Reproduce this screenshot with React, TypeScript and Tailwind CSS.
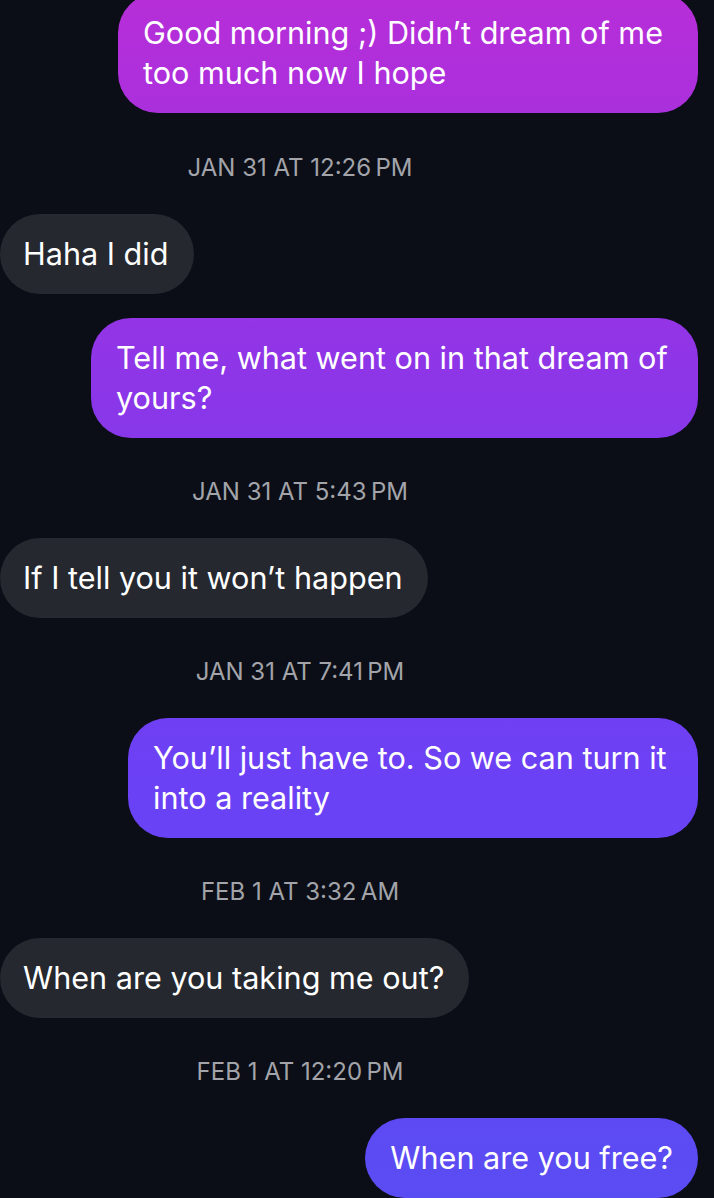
const font = { fontFamily: "Inter, 'Noto Sans', sans-serif" };

type Item =
  | { kind: "sent"; lines: string[]; w?: string }
  | { kind: "recv"; lines: string[] }
  | { kind: "time"; text: string };

const thread: Item[] = [
  { kind: "sent", lines: ["Good morning ;) Didn\u2019t dream of me", "too much now I hope"], w: "w-[580px]" },
  { kind: "time", text: "JAN 31 AT 12:26\u2009PM" },
  { kind: "recv", lines: ["Haha I did"] },
  { kind: "sent", lines: ["Tell me, what went on in that dream of", "yours?"], w: "w-[607px]" },
  { kind: "time", text: "JAN 31 AT 5:43\u2009PM" },
  { kind: "recv", lines: ["If I tell you it won\u2019t happen"] },
  { kind: "time", text: "JAN 31 AT 7:41\u2009PM" },
  { kind: "sent", lines: ["You\u2019ll just have to. So we can turn it", "into a reality"], w: "w-[570px]" },
  { kind: "time", text: "FEB 1 AT 3:32\u2009AM" },
  { kind: "recv", lines: ["When are you taking me out?"] },
  { kind: "time", text: "FEB 1 AT 12:20\u2009PM" },
  { kind: "sent", lines: ["When are you free?"] },
];

function Lines({ lines }: { lines: string[] }) {
  return (
    <>
      {lines.map((l, i) => (
        <div key={i} className="whitespace-nowrap">
          {l}
        </div>
      ))}
    </>
  );
}

export default function App() {
  return (
    <div className="h-[1198px] w-[714px] overflow-hidden bg-[#0b0e16] text-white" style={font}>
      <div className="flex flex-col -mt-[7px]">
        {thread.map((item, i) => {
          const prev = thread[i - 1];
          const afterBubble = prev && prev.kind !== "time";
          if (item.kind === "time") {
            return (
              <div
                key={i}
                className={`${i === 1 ? "mt-[43px]" : "mt-[42px]"} mb-[34px] h-6 w-[600px] text-center text-[24px] leading-6 text-[#a2a4aa]`}
              >
                {item.text}
              </div>
            );
          }
          const gap = afterBubble ? "mt-6" : "";
          if (item.kind === "sent") {
            return (
              <div
                key={i}
                className={`${gap} ${item.w ?? ""} mr-4 self-end rounded-[40px] bg-[linear-gradient(180deg,#b62ed8_0%,#9a33e3_22%,#8c36e8_32%,#6b41f5_65%,#5a4cf3_100%)] bg-fixed px-[25px] py-5 text-[30.6px] leading-10 text-white`}
              >
                <Lines lines={item.lines} />
              </div>
            );
          }
          return (
            <div
              key={i}
              className={`${gap} self-start rounded-[40px] bg-[#25282e] pl-[23px] pr-[25px] py-5 text-[30.6px] leading-10 text-white`}
            >
              <Lines lines={item.lines} />
            </div>
          );
        })}
      </div>
    </div>
  );
}
